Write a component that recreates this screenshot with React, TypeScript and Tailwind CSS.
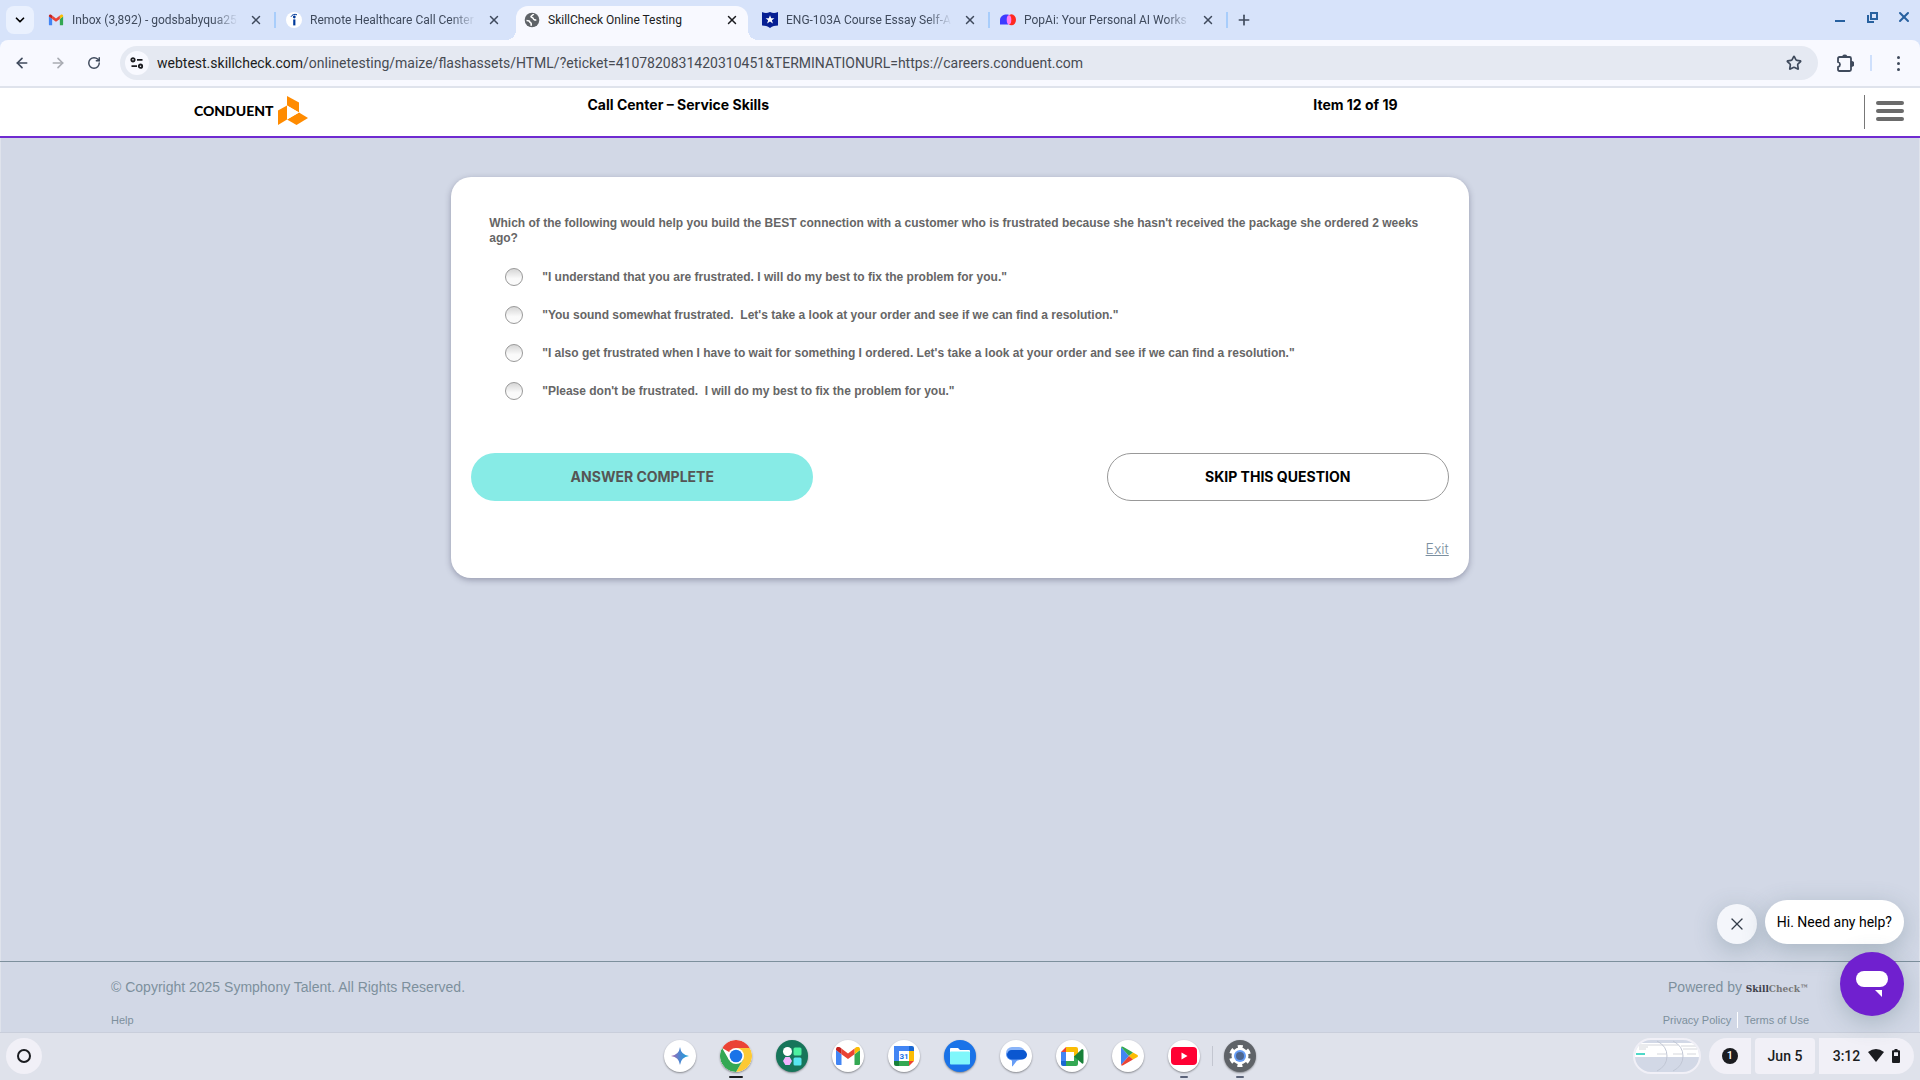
import type { ReactNode } from 'react';
import { ArrowLeft, ArrowRight, ChevronDown, Plus, RotateCw, Star, X } from 'lucide-react';

type Tab = {
  title: string;
  icon: ReactNode;
  active?: boolean;
  divider?: boolean;
};

function GmailMark() {
  return (
    <>
      <path d="M0 3v13.400C0 17.300.7 18 1.600 18h3.900V7.200z" fill="#4285f4" />
      <path d="M18.500 18h3.900c.9 0 1.600-.7 1.600-1.600V3l-5.500 4.200z" fill="#34a853" />
      <path d="M18.500 1.600v5.600L24 3v-.8C24 .2 21.700-.9 20.100.3z" fill="#fbbc04" />
      <path d="M5.500 7.200V1.600L12 6.500l6.500-4.900v5.600L12 12z" fill="#ea4335" />
      <path d="M0 2.200V3l5.500 4.200V1.600L3.900.3C2.300-.9 0 .2 0 2.200z" fill="#c5221f" />
    </>
  );
}

const tabs: Tab[] = [
  {
    title: 'Inbox (3,892) - godsbabyqua25',
    divider: true,
    icon: (
      <svg viewBox="-1.500 -4.500 27 27" className="size-4 shrink-0">
        <GmailMark />
      </svg>
    ),
  },
  {
    title: 'Remote Healthcare Call Center',
    icon: (
      <svg viewBox="0 0 16 16" className="size-4 shrink-0">
        <circle cx="8" cy="8" r="8" fill="#fff" />
        <path d="M5 4.800C6 2.600 8.500 1.700 11 2.800" fill="none" stroke="#003a9b" strokeWidth="1" />
        <circle cx="8.300" cy="5" r="1.400" fill="#003a9b" />
        <path d="M7.200 7.400h2.200v6H7.200z" fill="#003a9b" />
      </svg>
    ),
  },
  {
    title: 'SkillCheck Online Testing',
    active: true,
    icon: (
      <svg viewBox="0 0 16 16" className="size-4 shrink-0">
        <circle cx="8" cy="8" r="7.300" fill="#5f6368" />
        <path d="M2.500 8.500c2 0 3 .3 3.200 1.300.2.900 1.500.8 1.500 1.900v2M9.500 2c-.2 1.500-2.500 1.300-2.500 2.600 0 1.200 2 .8 2.300 2 .3 1.200 1.700 1.600 3 1.200" fill="none" stroke="#fff" strokeWidth="1.600" />
      </svg>
    ),
  },
  {
    title: 'ENG-103A Course Essay Self-A',
    divider: true,
    icon: (
      <svg viewBox="0 0 16 16" className="size-4 shrink-0">
        <path d="M0 0c3 1.200 5 1.200 8 0 3 1.200 5 1.200 8 0v13.500c-3 0-5.500.7-8 2.500-2.500-1.800-5-2.500-8-2.500z" fill="#061f93" />
        <path d="m8 3.300 1.200 3h3.200L9.900 8.200l1 3.200L8 9.500l-2.900 1.900 1-3.200-2.500-1.900h3.200z" fill="#fff" />
      </svg>
    ),
  },
  {
    title: 'PopAi: Your Personal AI Works',
    divider: true,
    icon: (
      <svg viewBox="0 0 16 16" className="size-4 shrink-0">
        <path d="M7 2.500c3 0 4.500 2.500 4.500 5s-2 5-4.500 5H0V8c0-3.500 3-5.500 7-5.500z" fill="#3d3bff" />
        <ellipse cx="11.500" cy="7.800" rx="4.500" ry="5.500" fill="#ff2a1f" />
        <ellipse cx="9" cy="7.800" rx="2.300" ry="4.600" fill="#ff7df0" />
      </svg>
    ),
  },
];

function BrowserTab({ tab }: { tab: Tab }) {
  return (
    <div
      className={`relative flex h-full min-w-0 items-center gap-2 pb-1.5 ${
        tab.active
          ? 'mr-1 ml-0.5 w-[232px] rounded-t-xl bg-[#f8f9ff] pr-1.5 pl-2 text-[#1b1c20]'
          : 'w-[238px] pr-2.5 pl-2.5 text-[#3f4a5c]'
      }`}
    >
      {tab.icon}
      <span
        className={`min-w-0 flex-1 overflow-hidden text-xs whitespace-nowrap ${
          tab.active ? '' : 'mask-r-from-85% mask-r-to-100%'
        }`}
      >
        {tab.title}
      </span>
      <button aria-label={`Close ${tab.title}`} className="flex size-5 shrink-0 items-center justify-center">
        <X className="size-3.5" strokeWidth={2.500} />
      </button>
      {tab.divider && <span className="absolute top-1.5 right-0 h-4 w-0.5 bg-[#a8cdfb]" />}
      {tab.active && (
        <>
          <span className="absolute bottom-0 -left-2.5 size-2.5 bg-[radial-gradient(circle_at_top_left,transparent_10px,#f8f9ff_10px)]" />
          <span className="absolute -right-2.5 bottom-0 size-2.5 bg-[radial-gradient(circle_at_top_right,transparent_10px,#f8f9ff_10px)]" />
        </>
      )}
    </div>
  );
}

function BrowserChrome() {
  return (
    <header className="bg-[#d7e3fa]">
      <div className="flex h-10 items-start">
        <button aria-label="Search tabs" className="mt-1.5 mr-1 ml-1.5 flex size-7 items-center justify-center rounded-lg bg-[#eaf1fe]">
          <ChevronDown className="size-3.5" strokeWidth={3} />
        </button>
        <nav className="flex h-full min-w-0 items-stretch pt-1.5">
          {tabs.map((tab) => (
            <BrowserTab key={tab.title} tab={tab} />
          ))}
        </nav>
        <button aria-label="New tab" className="mt-1.5 ml-0.5 flex size-7 items-center justify-center text-[#3f4a5c]">
          <Plus className="size-4" strokeWidth={2.500} />
        </button>
        <div className="mt-2 mr-2 ml-auto flex gap-4 text-[#27619f]">
          <button aria-label="Minimize" className="flex h-[18px] w-4 items-end justify-center">
            <span className="mb-1 h-0.5 w-2.5 bg-current" />
          </button>
          <button aria-label="Restore" className="flex h-[18px] w-4 items-center justify-center">
            <svg viewBox="0 0 11 11" className="size-[11px]" fill="none" stroke="currentColor" strokeWidth="2">
              <path d="M4 1h6v6H4zM1 3v7h6" />
            </svg>
          </button>
          <button aria-label="Close window" className="flex h-[18px] w-4 items-center justify-center">
            <X className="size-4" strokeWidth={3} />
          </button>
        </div>
      </div>

      <div className="flex h-12 items-center rounded-t-lg border-b-2 border-[#dfe3ec] bg-[#f8f9ff] pr-3.5 pl-3 text-[#3f4a5c]">
        <button aria-label="Back" className="flex w-5 justify-center">
          <ArrowLeft className="size-4" strokeWidth={2.500} />
        </button>
        <button aria-label="Forward" className="ml-4 flex w-5 justify-center text-[#a9acb3]">
          <ArrowRight className="size-4" strokeWidth={2.500} />
        </button>
        <button aria-label="Reload" className="ml-4 flex w-5 justify-center">
          <RotateCw className="size-3.5" strokeWidth={2.500} />
        </button>
        <div className="ml-4 flex h-[34px] flex-1 items-center rounded-full bg-[#e5e9f2] pr-4 pl-[5px]">
          <button aria-label="Site information" className="flex size-6 items-center justify-center rounded-full bg-[#f8f9ff] text-[#1b1c20]">
            <svg viewBox="0 0 14 12" className="w-3.5" fill="none" stroke="currentColor" strokeWidth="1.800">
              <circle cx="3" cy="2.800" r="1.700" />
              <circle cx="10.500" cy="9.200" r="1.700" />
              <path d="M7 2.800h5.500M1.500 9.200H7" />
            </svg>
          </button>
          <p className="ml-2 flex-1 text-sm text-[#474b52]">
            <span className="text-[#1b1c20]">webtest.skillcheck.com</span>
            /onlinetesting/maize/flashassets/HTML/?eticket=4107820831420310451&amp;TERMINATIONURL=https://careers.conduent.com
          </p>
          <button aria-label="Bookmark this tab">
            <Star className="size-4" strokeWidth={2.500} />
          </button>
        </div>
        <button aria-label="Extensions" className="ml-[18px]">
          <svg viewBox="0 0 18 18" className="size-[18px]" fill="none" stroke="currentColor" strokeWidth="1.800">
            <path d="M2 4.500q0-1.500 1.500-1.500h10Q15 3 15 4.500v11q0 1.500-1.500 1.500h-10Q2 17 2 15.500V13q2-.5 2-2.500T2 8z" />
            <path d="M7 2.500a2 2 0 0 1 3.500 0zM15.500 8a2 2 0 0 1 0 4z" fill="currentColor" />
          </svg>
        </button>
        <span className="mx-4 h-4 w-0.5 bg-[#cfe0fc]" />
        <button aria-label="Browser menu" className="ml-0.5 flex w-4 flex-col items-center gap-[3px]">
          <span className="size-[3px] rounded-full bg-current" />
          <span className="size-[3px] rounded-full bg-current" />
          <span className="size-[3px] rounded-full bg-current" />
        </button>
      </div>
    </header>
  );
}

function ConduentLogo() {
  return (
    <div className="flex items-center gap-1">
      <span className="font-[Lato,sans-serif] text-sm leading-4 font-black text-black">CONDUENT</span>
      <svg viewBox="0 0 30 30" className="size-[30px]" fill="#ff8b00">
        <path d="M9 0l12 6.500V16.500L9 9.500z" />
        <path d="M0 14.500 9 9.500V23.500L0 29z" />
        <path d="M9 23.500 21 16.500l9 5.500-11.500 7z" />
        <path d="M9 9.500 21 16.500 9 23.500z" fill="#fff" />
      </svg>
    </div>
  );
}

function TestHeader() {
  return (
    <div className="flex h-[50px] items-start border-b-2 border-[#6f2bd0] bg-white font-[Inter,sans-serif] text-sm font-bold text-black">
      <div className="w-[30.600%] pt-2 pl-[10.100%]">
        <ConduentLogo />
      </div>
      <h1 className="w-[37.800%] pt-[7px]">Call Center – Service Skills</h1>
      <p className="pt-[7px]">Item 12 of 19</p>
      <button aria-label="Open menu" className="mt-[7px] mr-4 ml-auto flex h-[34px] flex-col justify-center gap-1 border-l border-[#777] pb-0.5 pl-[11px]">
        <span className="h-1 w-7 rounded-full bg-[#6b6b6b]" />
        <span className="h-1 w-7 rounded-full bg-[#6b6b6b]" />
        <span className="h-1 w-7 rounded-full bg-[#6b6b6b]" />
      </button>
    </div>
  );
}

const answers = [
  '"I understand that you are frustrated. I will do my best to fix the problem for you."',
  '"You sound somewhat frustrated.\u00a0 Let\'s take a look at your order and see if we can find a resolution."',
  '"I also get frustrated when I have to wait for something I ordered. Let\'s take a look at your order and see if we can find a resolution."',
  '"Please don\'t be frustrated.\u00a0 I will do my best to fix the problem for you."',
];

function QuestionCard() {
  return (
    <main className="mx-auto mt-[39px] w-[53%] rounded-[20px] bg-white px-5 pt-[39px] pb-[19px] shadow-[0_2px_6px_rgba(60,60,90,0.4)]">
      <fieldset className="px-[18px] font-['Liberation_Sans',Arial,sans-serif] text-xs leading-[15px] font-bold text-[#666]">
        <legend>
          Which of the following would help you build the BEST connection with a customer who is frustrated because she
          hasn't received the package she ordered 2 weeks ago?
        </legend>
        <div className="mt-3 pl-4">
          {answers.map((answer, i) => (
            <label key={i} className="flex h-[38px] items-center gap-[19px]">
              <input
                type="radio"
                name="answer"
                className="size-[18px] appearance-none rounded-full border border-[#999] bg-linear-to-b from-[#d6d6d6] to-[#fafafa] to-60% checked:border-[5px]"
              />
              {answer}
            </label>
          ))}
        </div>
      </fieldset>
      <div className="mt-[43px] flex justify-between font-[Inter,sans-serif] text-sm font-bold">
        <button className="h-12 w-[35%] rounded-full bg-[#87ebe6] text-[#555]">ANSWER COMPLETE</button>
        <button className="h-12 w-[35%] rounded-full border border-[#999] text-black">SKIP THIS QUESTION</button>
      </div>
      <div className="mt-[38px] text-right font-[Inter,sans-serif] text-sm font-light">
        <a href="#exit" className="text-[#7b8fa0] underline">Exit</a>
      </div>
    </main>
  );
}

function PageFooter() {
  return (
    <footer className="mt-auto flex justify-between border-t border-[#7d909d] px-[111px] pt-[15px] pb-1 font-['Liberation_Sans',Arial,sans-serif] text-[#7d909d]">
      <div>
        <p className="text-sm leading-5">© Copyright 2025 Symphony Talent. All Rights Reserved.</p>
        <a href="#help" className="mt-[15px] block text-[11px] leading-4">Help</a>
      </div>
      <div className="text-right">
        <p className="text-sm leading-5">
          Powered by{' '}
          <span className="font-['DejaVu_Serif_Condensed','DejaVu_Serif',serif] text-[10px] leading-3 font-bold text-[#777]">
            <span className="text-[#3d404a]">Skill</span>Check™
          </span>
        </p>
        <div className="mt-[15px] flex justify-end text-[11px] leading-4">
          <a href="#privacy" className="border-r border-white pr-1.5">Privacy Policy</a>
          <a href="#terms" className="pl-1.5">Terms of Use</a>
        </div>
      </div>
    </footer>
  );
}

function ChatHelp() {
  return (
    <div className="absolute right-4 bottom-4 flex flex-col items-end gap-2">
      <div className="flex items-center gap-2">
        <button aria-label="Dismiss" className="mt-1 flex size-10 items-center justify-center rounded-full bg-[#f4f6fb] text-[#333d49] shadow-[0_6px_24px_rgba(70,100,110,0.3)]">
          <X className="size-5" strokeWidth={1.500} />
        </button>
        <p className="rounded-[22px] bg-white px-3 py-[11px] text-sm leading-[22px] text-black shadow-[0_6px_24px_rgba(70,100,110,0.3)]">
          Hi. Need any help?
        </p>
      </div>
      <button aria-label="Open chat" className="flex size-16 items-center justify-center rounded-full bg-[#7020cf] shadow-[0_6px_24px_rgba(70,100,110,0.3)]">
        <svg viewBox="0 0 32 26" className="w-8" fill="#fff">
          <rect width="32" height="16" rx="8" />
          <path d="M19 19h7v7z" />
        </svg>
      </button>
    </div>
  );
}

const shelfApps: { name: string; bg: string; art: ReactNode; running?: string }[] = [
  {
    name: 'Gemini',
    bg: 'bg-white',
    art: (
      <>
        <defs>
          <linearGradient id="spark">
            <stop stopColor="#b069ad" />
            <stop offset=".5" stopColor="#4b86d2" />
            <stop offset="1" stopColor="#18a5d8" />
          </linearGradient>
        </defs>
        <path d="M16 7q1 8 9 9-8 1-9 9-1-8-9-9 8-1 9-9z" fill="url(#spark)" />
      </>
    ),
  },
  {
    name: 'Chrome',
    bg: 'bg-white',
    running: 'w-3.5 bg-[#1b1c20]',
    art: (
      <>
        <path d="M16 16 2.140 8A16 16 0 0 1 29.860 8z" fill="#ea4335" />
        <path d="M16 8h13.860A16 16 0 0 1 16 32l6.930-12z" fill="#fcc934" />
        <path d="M9.070 20 2.140 8A16 16 0 0 0 16 32l6.930-12L16 16z" fill="#34a853" />
        <circle cx="16" cy="16" r="8" fill="#fff" />
        <circle cx="16" cy="16" r="6.300" fill="#1a73e8" />
      </>
    ),
  },
  {
    name: 'Apps',
    bg: 'bg-[#17755a]',
    art: (
      <>
        <circle cx="11.500" cy="11.500" r="4.500" fill="#fff" />
        <rect x="17.500" y="7.500" width="8" height="8" rx="1.500" fill="#4df0a0" />
        <path d="M9.300 17h4.400l2.300 4-2.300 4H9.300L7 21z" fill="#f2b3ff" />
        <rect x="17.500" y="17.500" width="8" height="8" rx="1.500" fill="#58e6f0" />
      </>
    ),
  },
  {
    name: 'Gmail',
    bg: 'bg-white',
    art: (
      <svg x="4" y="7" width="24" height="18" viewBox="0 0 24 18">
        <GmailMark />
      </svg>
    ),
  },
  {
    name: 'Calendar',
    bg: 'bg-white',
    art: (
      <>
        <path d="M6 6h15v5H11v10H6z" fill="#4285f4" />
        <path d="M21 6h3q2 0 2 2v3h-5z" fill="#1967d2" />
        <path d="M21 11h5v10h-5z" fill="#fbbc04" />
        <path d="M11 21h10v5H11z" fill="#34a853" />
        <path d="M6 21h5v5H8q-2 0-2-2z" fill="#188038" />
        <path d="M21 21h5l-5 5z" fill="#ea4335" />
        <text x="16" y="19" fontSize="8" fontWeight="700" textAnchor="middle" fill="#1a73e8">31</text>
      </>
    ),
  },
  {
    name: 'Files',
    bg: 'bg-[#1a73e8]',
    art: (
      <>
        <path d="M6 9q0-1 1-1h7l2 2h9q1 0 1 1v5H6z" fill="#fff" />
        <rect x="6" y="11.500" width="20" height="13" rx="1" fill="#80f7fb" />
      </>
    ),
  },
  {
    name: 'Messages',
    bg: 'bg-white',
    art: (
      <>
        <rect x="6" y="7" width="19" height="13" rx="6" fill="#8ab4f8" />
        <path d="M6 13q1 5 6 7.500V26q0 1 1-.2l4.500-5.800z" fill="#669df6" />
        <path d="M6 13q0 6 6 7.500h7z" fill="#669df6" />
        <rect x="7" y="10" width="20" height="9.500" rx="4.700" fill="#0b57d0" />
      </>
    ),
  },
  {
    name: 'Meet',
    bg: 'bg-white',
    art: (
      <>
        <path d="M10 7v5H5z" fill="#ea4335" />
        <path d="M5 12h5v9H5z" fill="#4285f4" />
        <path d="M5 21h5v5H7q-2 0-2-2z" fill="#1967d2" />
        <path d="M10 7h10q2 0 2 2v7h-4v-4h-8z" fill="#fbbc04" />
        <path d="M10 21h8v-5h4v8q0 2-2 2H10z" fill="#34a853" />
        <path d="M18 16.500 26 9q1.500 0 1.500 1.500v12q0 1.500-1.500 1z" fill="#188038" />
      </>
    ),
  },
  {
    name: 'Play Store',
    bg: 'bg-white',
    art: (
      <>
        <path d="M9 7v18l8-9z" fill="#4285f4" />
        <path d="M9 7q1-1 2.500 0L21 12.500 17 16z" fill="#34a853" />
        <path d="M21 12.500l4.500 2.500q1 1 0 2L21 19.500 17 16z" fill="#fbbc04" />
        <path d="M9 25q1 1 2.500 0L21 19.500 17 16z" fill="#ea4335" />
      </>
    ),
  },
  {
    name: 'YouTube',
    bg: 'bg-white',
    running: 'w-2 bg-[#5b6379]',
    art: (
      <>
        <rect x="3" y="7" width="26" height="18" rx="4" fill="#ff0033" />
        <path d="M13.500 12.500v7l6-3.500z" fill="#fff" />
      </>
    ),
  },
  {
    name: 'Settings',
    bg: 'bg-[#5f6368]',
    running: 'w-2 bg-[#5b6379]',
    art: (
      <>
        <circle cx="16" cy="16" r="8.500" fill="#fff" />
        <circle cx="16" cy="16" r="9" fill="none" stroke="#fff" strokeWidth="4" strokeDasharray="4.712 4.712" transform="rotate(15 16 16)" />
        <circle cx="16" cy="16" r="6" fill="#669df6" />
        <circle cx="16" cy="16" r="4" fill="#4d6690" />
      </>
    ),
  },
];

function Shelf() {
  return (
    <footer className="grid h-12 grid-cols-[1fr_auto_1fr] items-center border-t border-[#c9cedb] bg-[#dfe2eb] px-1.5 pb-0.5 text-[#1b1c20]">
      <button aria-label="Launcher" className="flex size-9 items-center justify-center rounded-full bg-[#f1f0f7]">
        <span className="size-3.5 rounded-full border-2 border-[#1b1c20]" />
      </button>
      <div className="flex gap-6">
        {shelfApps.map((app) => (
          <div key={app.name} className="relative">
            {app.name === 'Settings' && <span className="absolute top-1.5 -left-3 h-5 w-px bg-[#c3c6d0]" />}
            <button aria-label={app.name} className={`block size-8 overflow-hidden rounded-full shadow-[0_1px_2px_rgba(0,0,0,0.4)] ${app.bg}`}>
              <svg viewBox="0 0 32 32" className="size-8">{app.art}</svg>
            </button>
            {app.running && (
              <span className={`absolute right-4 -bottom-1.5 h-0.5 translate-x-1/2 rounded-full ${app.running}`} />
            )}
          </div>
        ))}
      </div>
      <div className="flex items-center justify-end gap-1 text-sm font-medium">
        <button aria-label="Recent screenshots" className="mr-1 flex h-9 w-[68px] overflow-hidden rounded-full border-2 border-[#f1f0f7] bg-[#d2d8e6]">
          <svg viewBox="0 0 64 32" className="h-8 w-16">
            <path d="M0 3h64v14H0z" fill="#fff" />
            <path d="M1 13h9v2H1z" fill="#4fd8c8" />
            <path d="M3 5h40M4 7h9M4 9h7M46 6h16M48 9h14M22 14h9M38 14h9M52 14h9" stroke="#d5d7dc" fill="none" />
            <path d="M22 1q10 5 10 15T22 31M38 1q10 5 10 15T38 31" stroke="#c0c6d4" fill="none" />
          </svg>
        </button>
        <button aria-label="1 notification" className="flex h-9 w-[42px] items-center justify-center rounded-l-full rounded-r bg-[#f1f0f7]">
          <span className="flex size-4 items-center justify-center rounded-full bg-[#1b1c20] text-[11px] text-white">1</span>
        </button>
        <button className="h-9 w-[60px] rounded bg-[#f1f0f7]">Jun 5</button>
        <button className="flex h-9 w-[95px] items-center justify-center gap-2 rounded-l rounded-r-full bg-[#f1f0f7]">
          3:12
          <svg viewBox="0 0 16 13" className="w-4" fill="currentColor">
            <path d="M0 3q8-6 16 0L8 13z" />
          </svg>
          <svg viewBox="0 0 8 14" className="w-2" fill="currentColor">
            <path d="M2.500 0h3v1.300H7q1 0 1 1V13q0 1-1 1H1q-1 0-1-1V2.300q0-1 1-1h1.500zM2 3.300V7h4V3.300z" fillRule="evenodd" />
          </svg>
        </button>
      </div>
    </footer>
  );
}

export default function App() {
  return (
    <div className="flex min-h-screen flex-col font-[Roboto,sans-serif]">
      <BrowserChrome />
      <div className="relative flex flex-1 flex-col bg-[#d2d8e6] shadow-[inset_1px_0_#dfe3ec,inset_-1px_0_#dfe3ec]">
        <TestHeader />
        <QuestionCard />
        <PageFooter />
        <ChatHelp />
      </div>
      <Shelf />
    </div>
  );
}
